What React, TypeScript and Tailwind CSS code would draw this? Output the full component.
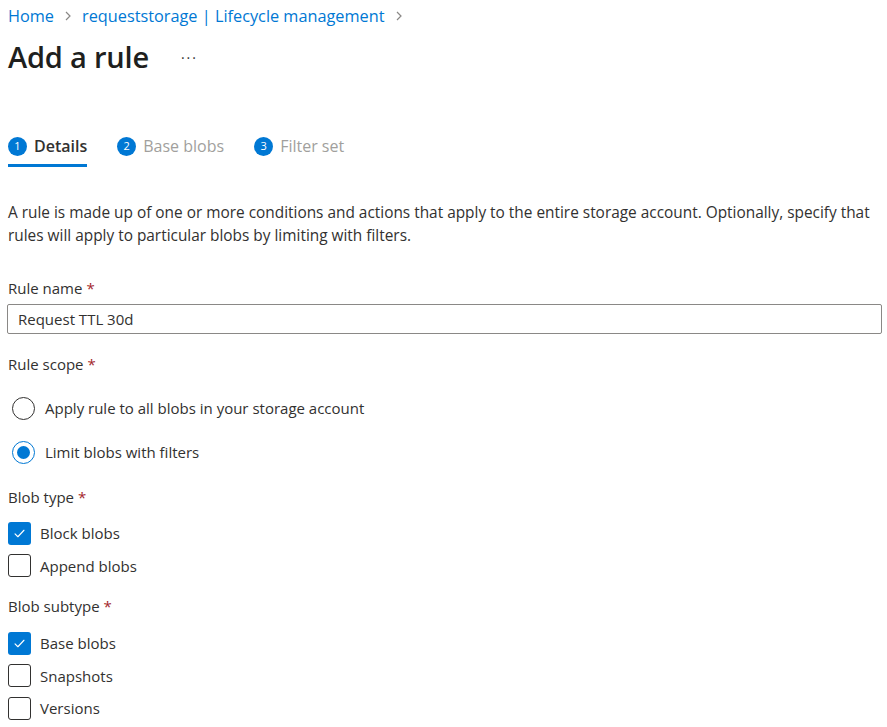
import React from "react";

const font = { fontFamily: '"Open Sans", "Noto Sans", Arial, sans-serif' };

function Req({ children }: { children: React.ReactNode }) {
  return (
    <div className="h-[22px] flex items-center text-[15px] text-[#323130]">
      {children}
      <span className="text-[#a4262c] ml-1">*</span>
    </div>
  );
}

function Check({ label, checked }: { label: string; checked?: boolean }) {
  return (
    <div className="h-[32.5px] flex items-center gap-[9px]">
      <span
        className={`w-[23px] h-[23px] rounded-[3px] flex items-center justify-center ${
          checked ? "bg-[#0078d4]" : "border border-[#323130] bg-white"
        }`}
      >
        {checked && (
          <svg width="13" height="13" viewBox="0 0 16 16" fill="none">
            <path d="M2.5 8.5l3.5 3.5 7.5-8" stroke="white" strokeWidth="1.4" strokeLinecap="round" strokeLinejoin="round" />
          </svg>
        )}
      </span>
      <span className="text-[15px] text-[#323130]">{label}</span>
    </div>
  );
}

function Radio({ label, checked }: { label: string; checked?: boolean }) {
  return (
    <div className="h-[44px] flex items-center gap-[10px] pl-[4px]">
      <span
        className={`w-[23px] h-[23px] rounded-full border flex items-center justify-center bg-white ${
          checked ? "border-[#0078d4]" : "border-[#323130]"
        }`}
      >
        {checked && <span className="w-[13px] h-[13px] rounded-full bg-[#0078d4]" />}
      </span>
      <span className="text-[15px] text-[#323130]">{label}</span>
    </div>
  );
}

function Step({ n, label, active }: { n: number; label: string; active?: boolean }) {
  return (
    <div className="flex flex-col">
      <div className="h-[36px] flex items-center gap-[7px]">
        <span className="w-[19px] h-[19px] rounded-full bg-[#0078d4] text-white text-[11px] flex items-center justify-center">
          {n}
        </span>
        <span className={`text-[16px] ${active ? "font-semibold text-[#323130]" : "text-[#a19f9d]"}`}>{label}</span>
      </div>
      <div className={`h-[3px] ${active ? "bg-[#0078d4]" : "bg-transparent"}`} />
    </div>
  );
}

export default function App() {
  return (
    <div className="w-[887px] h-[727px] bg-white px-[8px] overflow-hidden" style={font}>
      <div className="h-[22px] mt-[5px] flex items-center text-[16.3px] text-[#0078d4]">
        <span>Home</span>
        <svg className="mx-[8px]" width="12" height="12" viewBox="0 0 12 12">
          <path d="M4 2l4 4-4 4" stroke="#8a8886" strokeWidth="1.2" fill="none" />
        </svg>
        <span>requeststorage | Lifecycle management</span>
        <svg className="ml-[8px]" width="12" height="12" viewBox="0 0 12 12">
          <path d="M4 2l4 4-4 4" stroke="#8a8886" strokeWidth="1.2" fill="none" />
        </svg>
      </div>
      <div className="h-[40px] mt-[10px] flex items-center">
        <h1 className="text-[29px] font-semibold text-[#201f1e] tracking-[-0.2px]">Add a rule</h1>
        <span className="ml-[32px] text-[14px] text-[#323130] tracking-[2px]">···</span>
      </div>
      <div className="mt-[51px] flex gap-[30px]">
        <Step n={1} label="Details" active />
        <Step n={2} label="Base blobs" />
        <Step n={3} label="Filter set" />
      </div>
      <p className="mt-[34px] text-[15.4px] leading-[23px] text-[#323130]">
        A rule is made up of one or more conditions and actions that apply to the entire storage account. Optionally, specify that
        rules will apply to particular blobs by limiting with filters.
      </p>
      <div className="mt-[30px]">
        <Req>Rule name</Req>
      </div>
      <div className="mt-[5px] h-[30px] w-[875px] -ml-[1px] border border-[#8a8886] rounded-[2px] flex items-center px-[10px] text-[15px] text-[#323130]">
        Request TTL 30d
      </div>
      <div className="mt-[19px]">
        <Req>Rule scope</Req>
      </div>
      <div className="mt-[11px]">
        <Radio label="Apply rule to all blobs in your storage account" />
        <Radio label="Limit blobs with filters" checked />
      </div>
      <div className="mt-[12px]">
        <Req>Blob type</Req>
      </div>
      <div className="mt-[9px]">
        <Check label="Block blobs" checked />
        <Check label="Append blobs" />
      </div>
      <div className="mt-[13px]">
        <Req>Blob subtype</Req>
      </div>
      <div className="mt-[10px]">
        <Check label="Base blobs" checked />
        <Check label="Snapshots" />
        <Check label="Versions" />
      </div>
    </div>
  );
}
